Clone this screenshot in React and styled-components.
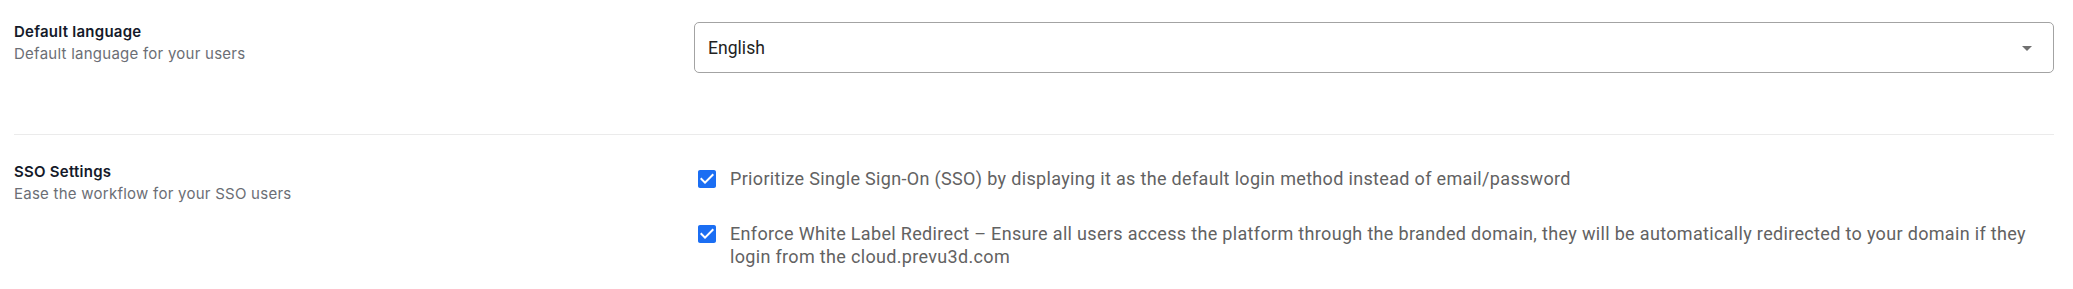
import React from "react";
import styled, { createGlobalStyle } from "styled-components";

const Global = createGlobalStyle`
  html, body { margin: 0; padding: 0; background: #ffffff; }
  body { font-family: Inter, "Noto Sans", sans-serif; }
  * { box-sizing: border-box; }
`;

const Page = styled.div`
  padding: 22px 19px 0 14px;
  width: 2073px;
`;

const Section = styled.section`
  display: grid;
  grid-template-columns: 1fr 2fr;
  align-items: start;
`;

const Info = styled.div`
  display: flex;
  flex-direction: column;
`;

const Title = styled.div`
  font-family: Inter, sans-serif;
  font-size: 15px;
  line-height: 20px;
  letter-spacing: 0.25px;
  font-weight: 600;
  color: #141a2a;
`;

const Subtitle = styled.div`
  margin-top: 2px;
  font-family: Inter, sans-serif;
  font-size: 15px;
  line-height: 20px;
  letter-spacing: 0.25px;
  font-weight: 400;
  color: #6b6e75;
`;

const Divider = styled.hr`
  margin: 61px 0 27px;
  border: 0;
  height: 1px;
  background: #ebebeb;
`;

const SelectBox = styled.div`
  position: relative;
  height: 51px;
  border: 1px solid #a3a3a3;
  border-radius: 5px;
  display: flex;
  align-items: center;
  padding: 0 40px 0 13px;
  font-family: Roboto, sans-serif;
  font-size: 17.6px;
  color: #222222;
  background: #fff;
`;

const Arrow = styled.svg`
  position: absolute;
  right: 14px;
  top: 50%;
  transform: translateY(-50%);
  width: 24px;
  height: 24px;
  fill: #707070;
`;

const CheckList = styled.div`
  display: flex;
  flex-direction: column;
  gap: 31px;
  padding-top: 5px;
`;

const CheckRow = styled.label`
  display: flex;
  align-items: flex-start;
  gap: 11px;
  padding-left: 1px;
`;

const CheckIcon = styled.svg`
  flex: none;
  width: 24px;
  height: 24px;
  fill: #1b6ef3;
  margin-top: 0px;
`;

const CheckText = styled.span`
  font-family: Roboto, sans-serif;
  font-size: 18px;
  line-height: 23px;
  letter-spacing: 0.33px;
  color: #626262;
`;

function Checkbox({ children }) {
  return (
    <CheckRow>
      <CheckIcon viewBox="0 0 24 24">
        <path d="M19 3H5c-1.11 0-2 .9-2 2v14c0 1.1.89 2 2 2h14c1.11 0 2-.9 2-2V5c0-1.1-.89-2-2-2zm-9 14l-5-5 1.41-1.41L10 14.17l7.59-7.59L19 8l-9 9z" />
      </CheckIcon>
      <CheckText>{children}</CheckText>
    </CheckRow>
  );
}

export default function App() {
  return (
    <>
      <Global />
      <Page>
        <Section>
          <Info>
            <Title>Default language</Title>
            <Subtitle>Default language for your users</Subtitle>
          </Info>
          <SelectBox>
            English
            <Arrow viewBox="0 0 24 24">
              <path d="M7 10l5 5 5-5z" />
            </Arrow>
          </SelectBox>
        </Section>
        <Divider />
        <Section>
          <Info>
            <Title>SSO Settings</Title>
            <Subtitle>Ease the workflow for your SSO users</Subtitle>
          </Info>
          <CheckList>
            <Checkbox>
              Prioritize Single Sign-On (SSO) by displaying it as the default login method instead of email/password
            </Checkbox>
            <Checkbox>
              Enforce White Label Redirect – Ensure all users access the platform through the branded domain, they will be automatically redirected to your domain if they login from the cloud.prevu3d.com
            </Checkbox>
          </CheckList>
        </Section>
      </Page>
    </>
  );
}
